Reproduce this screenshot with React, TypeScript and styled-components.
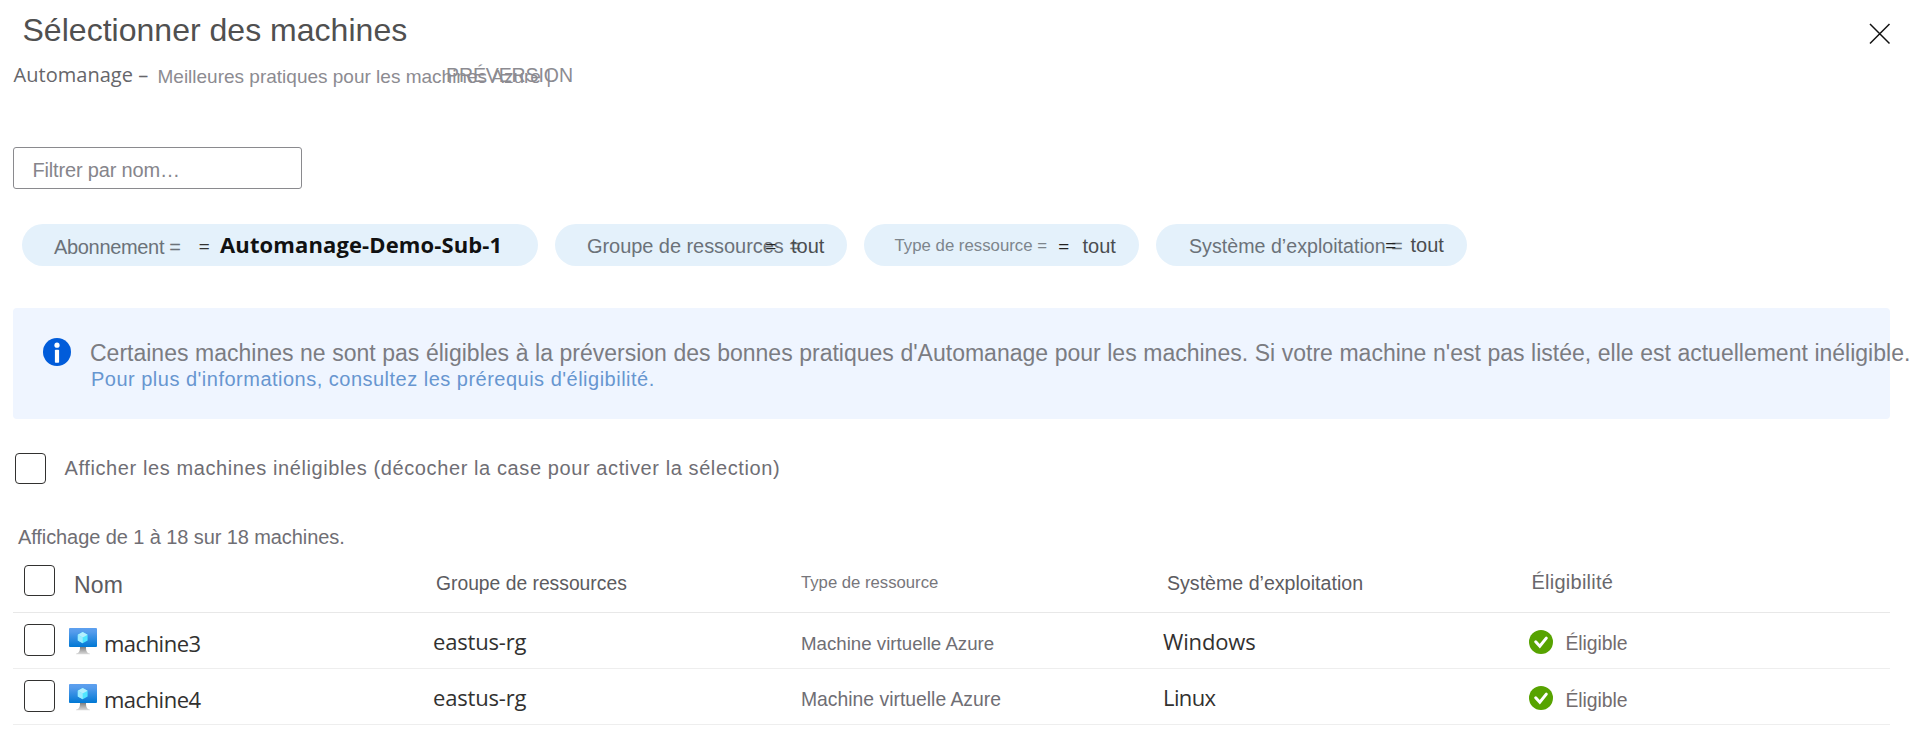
import React from "react";
import styled, { createGlobalStyle } from "styled-components";

const GlobalStyle = createGlobalStyle`
  * { box-sizing: border-box; }
  body { margin: 0; background: #fff; overflow: hidden; }
`;

const ARIAL = '"Liberation Sans", Arial, sans-serif';
const SEGOE = '"Open Sans", "Segoe UI", sans-serif';

interface LabelProps {
  $size?: number;
  $color?: string;
  $spacing?: number;
  $wordSpacing?: number;
  $width?: number;
  $left?: number;
  $top?: number;
  $ui?: boolean;
  $bold?: boolean;
}

const Label = styled.span<LabelProps>`
  display: block;
  flex: none;
  width: ${(p) => (p.$width ? `${p.$width}px` : "auto")};
  margin-left: ${(p) => p.$left ?? 0}px;
  margin-top: ${(p) => p.$top ?? 0}px;
  font-family: ${(p) => (p.$ui ? SEGOE : ARIAL)};
  font-size: ${(p) => p.$size ?? 20}px;
  font-weight: ${(p) => (p.$bold ? 700 : 400)};
  line-height: 24px;
  letter-spacing: ${(p) => p.$spacing ?? 0}px;
  word-spacing: ${(p) => p.$wordSpacing ?? 0}px;
  color: ${(p) => p.$color ?? "#6f6e74"};
  white-space: nowrap;
`;

const Page = styled.main`
  width: 1914px;
  height: 729px;
  padding: 0 24px 0 13px;
  background: #fff;
  overflow: hidden;
`;

const Header = styled.header`
  display: flex;
  justify-content: space-between;
  height: 62px;
  padding: 12px 0 0 9.5px;
`;

const Title = styled.h1`
  margin: 0;
  font: 400 32px/37px ${ARIAL};
  letter-spacing: 0.02px;
  color: #505050;
  white-space: nowrap;
`;

const CloseButton = styled.button`
  width: 22px;
  height: 22px;
  margin: 10.5px -0.5px 0 0;
  padding: 0;
  border: 0;
  background: none;
  svg { display: block; }
`;

const Subtitle = styled.div`
  display: flex;
  height: 85px;
`;

const FilterBox = styled.div`
  display: flex;
  width: 289px;
  height: 42px;
  padding-left: 18.5px;
  border: 1px solid #8a8a8e;
  border-radius: 3px;
`;

const Pills = styled.div`
  display: flex;
  gap: 17px;
  height: 42px;
  margin: 35px 0 0 9px;
`;

const Pill = styled.div<{ $width: number }>`
  display: flex;
  width: ${(p) => p.$width}px;
  height: 42px;
  border-radius: 21px;
  background: #e4f1fb;
`;

const Banner = styled.section`
  display: flex;
  width: 1877px;
  height: 111px;
  margin-top: 42px;
  padding: 30px 0 0 30px;
  border-radius: 4px;
  background: #eff5ff;
  svg { flex: none; display: block; }
`;

const BannerText = styled.div`
  padding-left: 19px;
`;

const Checkbox = styled.span<{ $height?: number }>`
  display: block;
  flex: none;
  width: 31px;
  height: ${(p) => p.$height ?? 31}px;
  border: 1px solid #323130;
  border-radius: 4px;
  background: #fff;
`;

const ToggleRow = styled.div`
  display: flex;
  height: 71px;
  padding: 34px 0 0 2px;
`;

const Count = styled.div`
  height: 75px;
  padding: 35px 0 0 5px;
`;

const Grid = styled.div<{ $height: number; $line: string }>`
  display: grid;
  grid-template-columns: 421px 367px 362px 366px 361px;
  width: 1877px;
  height: ${(p) => p.$height}px;
  border-bottom: 1px solid ${(p) => p.$line};
`;

const Cell = styled.div<{ $left?: number; $top?: number }>`
  display: flex;
  padding-left: ${(p) => p.$left ?? 0}px;
  padding-top: ${(p) => p.$top ?? 0}px;
`;

const IconSlot = styled.span<{ $left?: number; $top?: number }>`
  display: block;
  flex: none;
  margin-left: ${(p) => p.$left ?? 0}px;
  margin-top: ${(p) => p.$top ?? 0}px;
  svg { display: block; }
`;

const InfoIcon = () => (
  <svg width="28" height="28" viewBox="0 0 28 28">
    <circle cx="14" cy="14" r="14" fill="#015cda" />
    <circle cx="14" cy="7.2" r="2.6" fill="#fff" />
    <rect x="11.9" y="11.8" width="4.2" height="13" rx="0.8" fill="#fff" />
  </svg>
);

const CheckIcon = () => (
  <svg width="24" height="24" viewBox="0 0 24 24">
    <circle cx="12" cy="12" r="12" fill="#57a300" />
    <path d="M6.7 11.8 10.8 16.2 17.3 8.1" fill="none" stroke="#fff" strokeWidth="3" strokeLinecap="round" />
  </svg>
);

const MachineIcon = ({ id }: { id: string }) => (
  <svg width="28" height="27" viewBox="0 0 28 27">
    <defs>
      <linearGradient id={`screen-${id}`} x1="0" y1="0" x2="0" y2="1">
        <stop offset="0" stopColor="#5ea0ef" />
        <stop offset="0.2" stopColor="#559cec" />
        <stop offset="1" stopColor="#0078d4" />
      </linearGradient>
      <linearGradient id={`stand-${id}`} x1="0" y1="0" x2="0" y2="1">
        <stop offset="0" stopColor="#808080" />
        <stop offset="1" stopColor="#dcdcdc" />
      </linearGradient>
    </defs>
    <rect x="0" y="0" width="28" height="19" rx="0.9" fill={`url(#screen-${id})`} />
    <path d="M11 19h6c0 4 .7 5.900 4 6.700v.6H7v-.6c3.300-.8 4-2.700 4-6.700z" fill={`url(#stand-${id})`} />
    <path d="M13.700 4 18.600 6.800v5.600l-4.900 2.800-4.900-2.800V6.800z" fill="#50e6ff" />
    <path d="M13.700 4 18.600 6.800 13.700 9.600 8.800 6.800z" fill="#b4effd" />
    <path d="M8.800 6.800 13.700 9.600v5.600l-4.900-2.800z" fill="#9cebff" />
  </svg>
);

interface Machine {
  name: string;
  group: string;
  os: string;
  osSpacing: number;
  typeSize: number;
  typeTop: number;
  statusTop: number;
}

const machines: Machine[] = [
  { name: "machine3", group: "eastus-rg", os: "Windows", osSpacing: -0.15, typeSize: 18.7, typeTop: 19, statusTop: 18 },
  { name: "machine4", group: "eastus-rg", os: "Linux", osSpacing: -0.6, typeSize: 19.35, typeTop: 18, statusTop: 19 },
];

export default function App() {
  return (
    <>
      <GlobalStyle />
      <Page>
        <Header>
          <Title>Sélectionner des machines</Title>
          <CloseButton aria-label="Fermer">
            <svg width="22" height="22" viewBox="0 0 22 22">
              <path d="M1 1 20.500 20.500M20.500 1 1 20.500" stroke="#111" strokeWidth="1.500" fill="none" />
            </svg>
          </CloseButton>
        </Header>

        <Subtitle>
          <Label $ui $color="#66666a" $width={144} $top={1} $left={0.5} $spacing={0.03}>Automanage –</Label>
          <Label $size={19} $color="#8c8b91" $width={288.5} $top={3}>
            Meilleures pratiques pour les machines Azure |
          </Label>
          <Label $size={19.5} $color="#8c8b91" $spacing={-0.1} $top={1}>PRÉVERSION</Label>
        </Subtitle>

        <FilterBox>
          <Label $color="#86858b" $spacing={-0.17} $top={10}>Filtrer par nom…</Label>
        </FilterBox>

        <Pills>
          <Pill $width={516}>
            <Label $left={32} $top={11} $spacing={-0.33} $width={144.5} $color="#6b7279">Abonnement =</Label>
            <Label $ui $top={11} $width={21.5} $color="#333">=</Label>
            <Label $ui $bold $size={22} $spacing={0.12} $top={8} $color="#111">Automanage-Demo-Sub-1</Label>
          </Pill>
          <Pill $width={292}>
            <Label $left={32} $top={10} $width={178} $spacing={-0.06} $color="#6b7279">Groupe de ressources =</Label>
            <Label $ui $top={11} $width={26} $color="#222">=</Label>
            <Label $top={10} $color="#4a4d50">tout</Label>
          </Pill>
          <Pill $width={275}>
            <Label $size={16.8} $left={30.5} $top={10} $width={163.5} $color="#7d858c">Type de ressource =</Label>
            <Label $ui $top={11} $width={24.5} $color="#222">=</Label>
            <Label $top={10} $color="#4a4d50">tout</Label>
          </Pill>
          <Pill $width={311}>
            <Label $size={19.6} $left={33} $top={10} $width={196} $spacing={0.03} $color="#6b7279">Système d’exploitation =</Label>
            <Label $ui $top={10} $width={25.5} $color="#222">=</Label>
            <Label $top={9} $color="#4a4d50">tout</Label>
          </Pill>
        </Pills>

        <Banner>
          <InfoIcon />
          <BannerText>
            <Label $size={23} $wordSpacing={0.2} $top={3} $color="#7b7c82">
              Certaines machines ne sont pas éligibles à la préversion des bonnes pratiques d'Automanage pour les machines. Si votre machine n'est pas listée, elle est actuellement inéligible.
            </Label>
            <Label $spacing={0.49} $left={1} $top={2} $color="#6796d0">
              Pour plus d'informations, consultez les prérequis d'éligibilité.
            </Label>
          </BannerText>
        </Banner>

        <ToggleRow>
          <Checkbox />
          <Label $spacing={0.6} $left={18.5} $top={3}>
            Afficher les machines inéligibles (décocher la case pour activer la sélection)
          </Label>
        </ToggleRow>

        <Count>
          <Label $spacing={-0.09}>Affichage de 1 à 18 sur 18 machines.</Label>
        </Count>

        <Grid $height={48} $line="#e8e8e8">
          <Cell $left={11}>
            <Checkbox />
            <Label $size={23} $left={19} $top={8} $spacing={0.2} $color="#5c5b60">Nom</Label>
          </Cell>
          <Cell $left={2} $top={7}>
            <Label $size={19.3} $color="#5c5b60">Groupe de ressources</Label>
          </Cell>
          <Cell $top={6}>
            <Label $size={16.7} $color="#77767b">Type de ressource</Label>
          </Cell>
          <Cell $left={4} $top={6}>
            <Label $size={19.6} $color="#5c5b60">Système d’exploitation</Label>
          </Cell>
          <Cell $left={2.5} $top={5}>
            <Label $spacing={0.25} $color="#69686c">Éligibilité</Label>
          </Cell>
        </Grid>

        {machines.map((m) => (
          <Grid key={m.name} $height={56} $line="#eeeeee">
            <Cell $left={11} $top={11}>
              <Checkbox $height={32} />
              <IconSlot $left={14} $top={4}>
                <MachineIcon id={m.name} />
              </IconSlot>
              <Label $ui $size={22} $spacing={-0.5} $left={7} $top={7} $color="#323130">{m.name}</Label>
            </Cell>
            <Cell $top={16}>
              <Label $ui $size={22} $spacing={-0.18} $left={-1} $color="#323130">{m.group}</Label>
            </Cell>
            <Cell $top={m.typeTop}>
              <Label $size={m.typeSize}>Machine virtuelle Azure</Label>
            </Cell>
            <Cell $top={16}>
              <Label $ui $size={22} $spacing={m.osSpacing} $color="#323130">{m.os}</Label>
            </Cell>
            <Cell>
              <IconSlot $top={17}>
                <CheckIcon />
              </IconSlot>
              <Label $size={19.4} $spacing={-0.08} $left={12.5} $top={m.statusTop} $color="#726c6e">Éligible</Label>
            </Cell>
          </Grid>
        ))}
      </Page>
    </>
  );
}
